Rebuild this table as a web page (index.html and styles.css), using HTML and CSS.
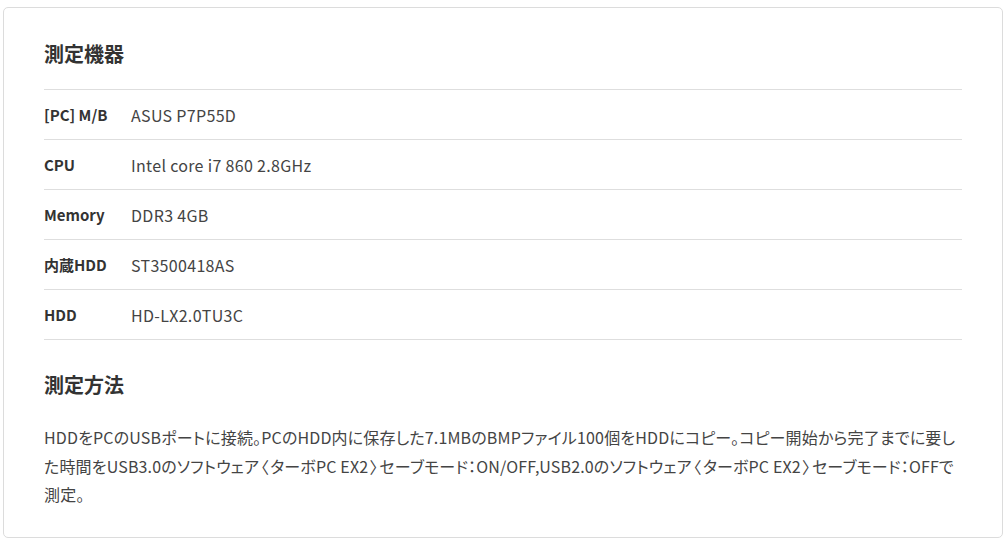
FILE: index.html
```html
<!DOCTYPE html>
<html lang="ja">
<head>
<meta charset="utf-8">
<link rel="stylesheet" href="styles.css">
</head>
<body>
<section class="card">
  <h2 class="title">測定機器</h2>
  <div class="specs">
    <div class="row"><div class="label">[PC] M/B</div><div class="value">ASUS P7P55D</div></div>
    <div class="row"><div class="label">CPU</div><div class="value">Intel core i7 860 2.8GHz</div></div>
    <div class="row"><div class="label">Memory</div><div class="value">DDR3 4GB</div></div>
    <div class="row"><div class="label">内蔵HDD</div><div class="value">ST3500418AS</div></div>
    <div class="row"><div class="label">HDD</div><div class="value">HD-LX2.0TU3C</div></div>
  </div>
  <h2 class="title title2">測定方法</h2>
  <p class="desc">HDDをPCのUSBポートに接続。PCのHDD内に保存した7.1MBのBMPファイル100個をHDDにコピー。コピー開始から完了までに要した時間をUSB3.0のソフトウェア<span class="br">〈</span>ターボPC EX2<span class="br">〉</span>セーブモード：ON/OFF,USB2.0のソフトウェア<span class="br">〈</span>ターボPC EX2<span class="br">〉</span>セーブモード：OFFで測定。</p>
</section>
</body>
</html>
```
FILE: styles.css
```css
html, body {
  margin: 0;
  padding: 0;
  background: #fff;
}
body {
  padding: 7px 4px 5px 3px;
  font-family: "Noto Sans CJK JP", sans-serif;
  font-feature-settings: "palt";
  color: #333;
}
.card {
  border: 1px solid #dcdcdc;
  border-radius: 5px;
  padding: 32px 40px 28px 40px;
}
.title {
  margin: 0 0 22px;
  font-size: 20px;
  line-height: 27px;
  font-weight: 700;
  color: #333;
}
.title2 {
  margin-top: 31px;
  margin-bottom: 25px;
}
.specs {
  border-top: 1px solid #dedede;
}
.row {
  display: flex;
  align-items: center;
  height: 49px;
  border-bottom: 1px solid #dedede;
  font-size: 15px;
}
.label {
  width: 87px;
  font-size: 15px;
  font-weight: 700;
  color: #333;
}
.value {
  font-size: 16px;
  letter-spacing: 0.02em;
  color: #444;
}
.desc {
  margin: 0;
  font-size: 16px;
  line-height: 28.5px;
  letter-spacing: 0.01em;
  color: #444;
}
.br {
  margin: 0 1.5px;
}
```
